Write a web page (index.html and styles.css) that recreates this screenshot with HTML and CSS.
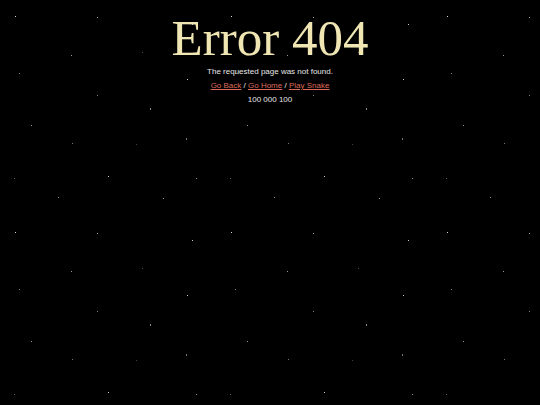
FILE: index.html
```html
<!DOCTYPE html>
<html lang="en">
<head>
<meta charset="utf-8">
<title>Error 404</title>
<link rel="stylesheet" href="styles.css">
</head>
<body>
<svg class="stars" width="100%" height="100%" aria-hidden="true">
  <defs>
    <pattern id="starfield" width="216" height="216" patternUnits="userSpaceOnUse">
      <rect x="15" y="16" width="1" height="1" fill="#d8d8d8"/>
      <rect x="97" y="17" width="1" height="1" fill="#9a9a9a"/>
      <rect x="192" y="24" width="1" height="1" fill="#d0d0d0"/>
      <rect x="142" y="52" width="1" height="1" fill="#555"/>
      <rect x="71" y="55" width="1" height="1" fill="#999"/>
      <rect x="19" y="73" width="1" height="1" fill="#888"/>
      <rect x="187" y="79" width="1" height="1" fill="#cfcfcf"/>
      <rect x="97" y="95" width="1" height="1" fill="#888"/>
      <rect x="150" y="108" width="1" height="2" fill="#888"/>
      <rect x="31" y="125" width="1" height="1" fill="#999"/>
      <rect x="186" y="138" width="1" height="2" fill="#777"/>
      <rect x="72" y="143" width="1" height="1" fill="#777"/>
      <rect x="136" y="144" width="1" height="1" fill="#444"/>
      <rect x="108" y="176" width="1" height="1" fill="#ccc"/>
      <rect x="14" y="178" width="1" height="1" fill="#666"/>
      <rect x="196" y="178" width="1" height="1" fill="#888"/>
      <rect x="58" y="197" width="1" height="1" fill="#888"/>
      <rect x="163" y="198" width="1" height="1" fill="#999"/>
    </pattern>
  </defs>
  <rect width="100%" height="100%" fill="url(#starfield)"/>
</svg>
<main class="content">
  <h1 class="title">Error 404</h1>
  <p class="line">The requested page was not found.</p>
  <p class="line"><a href="#" class="link">Go Back</a> / <a href="#" class="link">Go Home</a> / <a href="#" class="link">Play Snake</a></p>
  <p class="line">100 000 100</p>
</main>
</body>
</html>
```
FILE: styles.css
```css
html, body {
  margin: 0;
  padding: 0;
  height: 100%;
  background: #000;
}
body {
  overflow: hidden;
  font-family: "Liberation Sans", Arial, sans-serif;
  color: #e6e6e6;
}
.stars {
  position: absolute;
  top: 0;
  left: 0;
  width: 540px;
  height: 405px;
  z-index: 0;
}
.content {
  position: relative;
  z-index: 1;
  display: flex;
  flex-direction: column;
  align-items: center;
  padding-top: 13px;
}
.title {
  margin: 0 0 1px;
  font-family: "Liberation Serif", "Times New Roman", serif;
  font-weight: normal;
  font-size: 51px;
  line-height: 51px;
  color: #efe6b3;
}
.line {
  margin: 0;
  font-size: 8px;
  line-height: 14px;
  color: #e6e6e6;
}
.link {
  color: #dc6a5c;
  text-decoration: underline;
}
```
